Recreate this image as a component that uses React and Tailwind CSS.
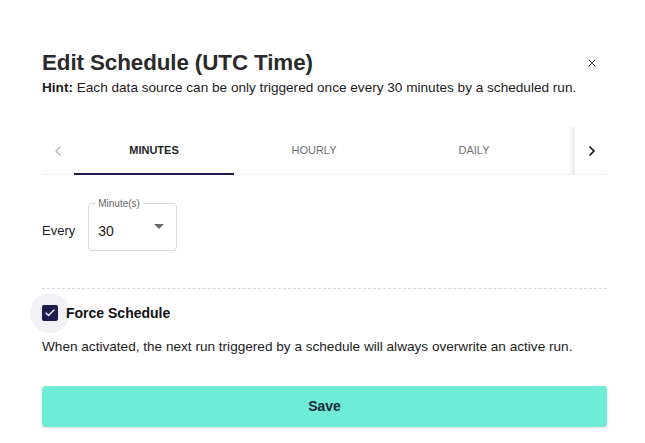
import { ChevronLeft, ChevronRight, X, Check } from 'lucide-react';

export default function App() {
  const tabs = ['MINUTES', 'HOURLY', 'DAILY'];

  return (
    <div className="w-[645px] h-[443px] bg-white pl-[42px] pr-[38px] pt-[49px] text-[#1c1c1c] font-['Liberation_Sans',Arial,sans-serif]">
      {/* Header */}
      <div className="flex items-center justify-between">
        <h1 className="text-[22.4px] leading-[28px] font-bold text-[#2a2a2a] tracking-[-0.1px]">
          Edit Schedule (UTC Time)
        </h1>
        <button className="mr-[9px] text-[#444]">
          <X size={12} strokeWidth={2} />
        </button>
      </div>
      <p className="mt-[3px] text-[13.6px] leading-[16px] text-[#1c1c1c]">
        <span className="font-bold">Hint:</span> Each data source can be only triggered once every 30 minutes by a scheduled run.
      </p>

      {/* Tabs */}
      <div className="mt-[31px] flex h-[48px] border-b border-[#f0f0f6]">
        <div className="w-[32px] flex items-center justify-center text-[#b5b5b5]">
          <ChevronLeft size={16} strokeWidth={2} />
        </div>
        {tabs.map((tab, i) => (
          <div
            key={tab}
            className={`relative w-[160px] flex items-center justify-center text-[11px] ${
              i === 0 ? 'text-[#1f1f1f] font-bold' : 'text-[#707070]'
            }`}
          >
            {tab}
            {i === 0 && (
              <span className="absolute left-0 right-0 -bottom-[1px] h-[2px] bg-[#1e1b4f]" />
            )}
          </div>
        ))}
        <div className="relative flex-1 flex items-center justify-center text-[#111]">
          <span className="absolute left-[15px] top-0 bottom-0 w-[6px] bg-gradient-to-r from-transparent to-[#e9e9ee]" />
          <ChevronRight size={16} strokeWidth={2.6} className="ml-[22px]" />
        </div>
      </div>

      {/* Every row */}
      <div className="mt-[28px] flex items-center gap-[13px]">
        <span className="text-[13px] mt-[8px]">Every</span>
        <div className="relative w-[89px] h-[48px] rounded-[4px] border border-[#d9d9d9] flex items-center pl-[9px] pr-[12px] justify-between">
          <span className="absolute -top-[5px] left-[6px] bg-white px-[3px] text-[10px] leading-[10px] text-[#666]">
            Minute(s)
          </span>
          <span className="text-[14px] mt-[8px]">30</span>
          <span className="w-0 h-0 border-l-[5px] border-r-[5px] border-t-[5px] border-l-transparent border-r-transparent border-t-[#6b6b6b] -mt-[2px]" />
        </div>
      </div>

      {/* Divider */}
      <div className="mt-[37px] border-t border-dashed border-[#d6d8e6]" />

      {/* Force schedule */}
      <div className="mt-[16px] flex items-center h-[16px]">
        <div className="relative w-[16px] h-[16px]">
          <span className="absolute -inset-[12px] rounded-full bg-[#f2f2f6]" />
          <span className="relative flex w-[16px] h-[16px] items-center justify-center rounded-[2px] bg-[#1e1b4f] text-white">
            <Check size={12} strokeWidth={2.5} />
          </span>
        </div>
        <span className="relative ml-[8px] text-[14px] font-bold text-[#111]">Force Schedule</span>
      </div>
      <p className="mt-[18px] text-[13.6px] leading-[16px] text-[#1c1c1c]">
        When activated, the next run triggered by a schedule will always overwrite an active run.
      </p>

      {/* Save */}
      <button className="mt-[31px] w-full h-[41px] rounded-[4px] bg-[#6eecd6] shadow-[0_1px_3px_rgba(0,0,0,0.12)] text-[14px] font-semibold text-[#1e2a35]">
        Save
      </button>
    </div>
  );
}
